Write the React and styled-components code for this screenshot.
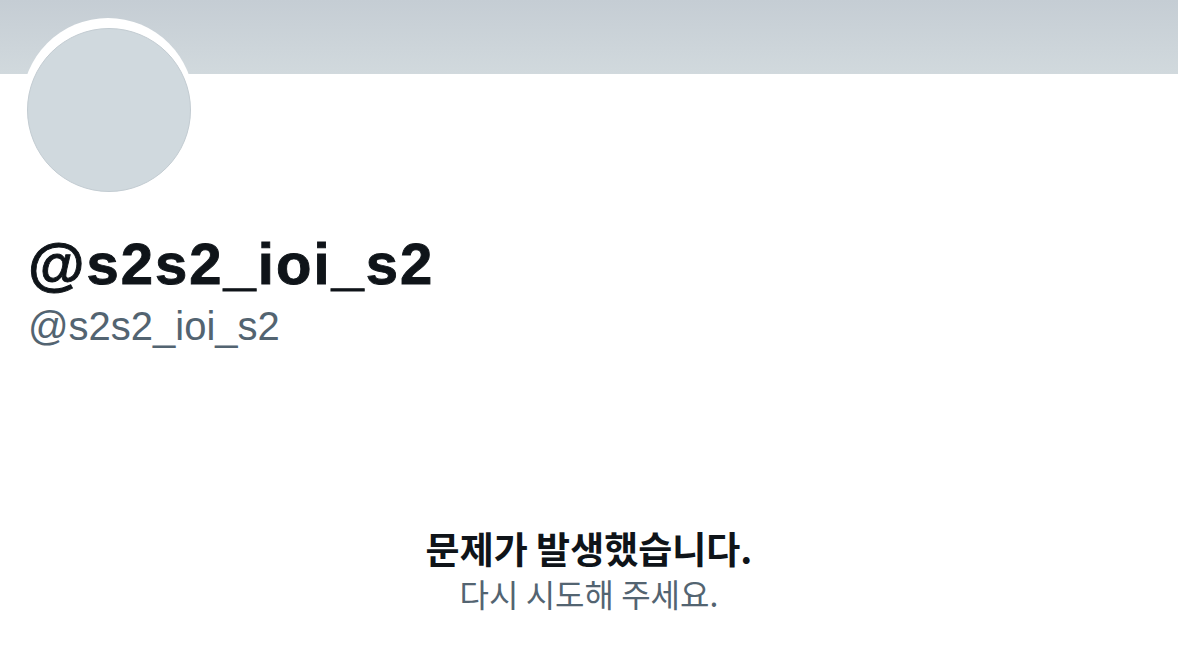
import React from 'react';
import styled, { createGlobalStyle } from 'styled-components';

const GlobalStyle = createGlobalStyle`
    html, body {
        margin: 0;
        padding: 0;
        background: #ffffff;
    }
    body {
        font-family: 'Liberation Sans', 'Noto Sans CJK KR', sans-serif;
        color: #0f1419;
    }
`;

export default function App() {
    return (
        <React.Fragment>
            <GlobalStyle />
            <StyledPage>
                <StyledBanner />
                <StyledProfile>
                    <StyledAvatarRing>
                        <StyledAvatar />
                    </StyledAvatarRing>
                    <StyledName>@s2s2_ioi_s2</StyledName>
                    <StyledHandle>@s2s2_ioi_s2</StyledHandle>
                </StyledProfile>
                <StyledError>
                    <StyledErrorTitle>문제가 발생했습니다.</StyledErrorTitle>
                    <StyledErrorText>다시 시도해 주세요.</StyledErrorText>
                </StyledError>
            </StyledPage>
        </React.Fragment>
    );
}

// styled components
const StyledPage = styled.div`
    width: 1178px;
    height: 646px;
    overflow: hidden;
    display: flex;
    flex-direction: column;
`;

const StyledBanner = styled.div`
    height: 74px;
    background: linear-gradient(180deg, #c5cdd4 0%, #d1d9dd 100%);
`;

const StyledProfile = styled.div`
    display: flex;
    flex-direction: column;
    align-items: flex-start;
    padding-left: 28px;
`;

const StyledAvatarRing = styled.div`
    box-sizing: border-box;
    width: 172px;
    height: 172px;
    margin: -56px 0 0 -6px;
    padding: 10px 0 0 5px;
    border-radius: 50%;
    background: #ffffff;
`;

const StyledAvatar = styled.div`
    box-sizing: border-box;
    width: 164px;
    height: 164px;
    border-radius: 50%;
    background: #d0d9de;
    border: 1px solid #c3ccd2;
`;

const StyledName = styled.h1`
    margin: 42px 0 0;
    font-family: 'Liberation Sans', sans-serif;
    font-weight: 700;
    font-size: 58px;
    line-height: 64px;
    letter-spacing: 2px;
    color: #0f1419;
    -webkit-text-stroke: 0.9px #0f1419;
`;

const StyledHandle = styled.div`
    margin-top: 8px;
    font-family: 'Liberation Sans', sans-serif;
    font-size: 40px;
    line-height: 44px;
    color: #536471;
`;

const StyledError = styled.div`
    display: flex;
    flex-direction: column;
    align-items: center;
    margin-top: 180px;
    font-family: 'Noto Sans CJK KR', 'Liberation Sans', sans-serif;
`;

const StyledErrorTitle = styled.div`
    font-weight: 700;
    font-size: 37px;
    line-height: 40px;
    color: #0f1419;
`;

const StyledErrorText = styled.div`
    margin-top: 5px;
    font-size: 32px;
    line-height: 40px;
    color: #536471;
`;
